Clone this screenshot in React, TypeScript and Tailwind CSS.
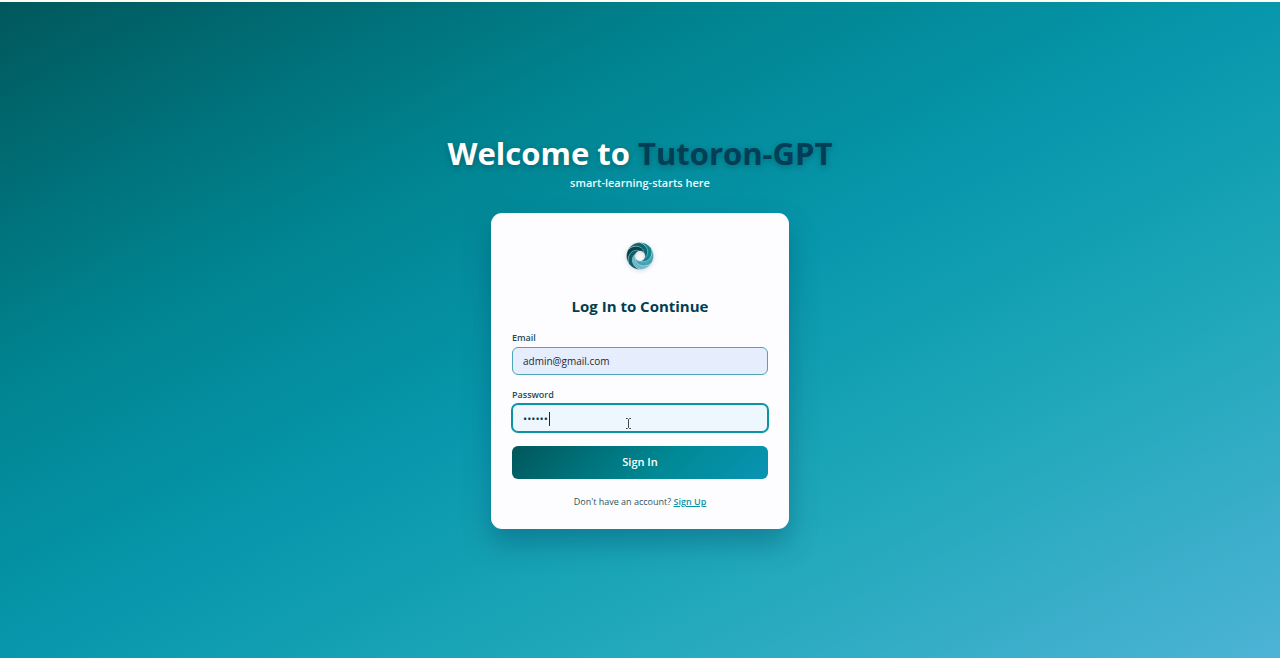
import { useId } from "react";

const blades = [
  { angle: 30, fill: "#6db6cc" },
  { angle: 90, fill: "#0b5f69" },
  { angle: 150, fill: "#04454d" },
  { angle: 210, fill: "#0c6670" },
  { angle: 270, fill: "#15858f" },
  { angle: 330, fill: "#45a3b5" },
];

function polar(radius: number, degrees: number) {
  const t = (degrees * Math.PI) / 180;
  return `${(radius * Math.cos(t)).toFixed(2)} ${(radius * Math.sin(t)).toFixed(2)}`;
}

// Each blade runs along the rim, then spirals in under the next one.
function bladePath() {
  const outer: string[] = [];
  const inner: string[] = [];
  for (let a = 0; a <= 180; a += 10) {
    const rim = a <= 60 ? 13.5 : 13.5 - ((a - 60) / 120) * 8.5;
    outer.push(polar(rim, a));
    const depth = 13.5 - 8.5 * Math.min(1, a / 110);
    inner.push(polar(Math.min(rim, depth), a));
  }
  return `M${outer.join("L")}L${inner.reverse().join("L")}Z`;
}

function Logo() {
  const d = bladePath();
  return (
    <svg viewBox="-16 -16 32 32" className="size-8 drop-shadow-sm" role="img" aria-label="Tutoron-GPT">
      {blades.map((blade) => (
        <path
          key={blade.angle}
          transform={`rotate(${blade.angle})`}
          fill={blade.fill}
          stroke="#e8f6f8"
          strokeWidth={0.3}
          d={d}
        />
      ))}
    </svg>
  );
}

export default function App() {
  const emailId = useId();
  const passwordId = useId();

  return (
    <main className="flex min-h-screen flex-col items-center justify-center border-t-2 border-[#fdfdf0] bg-[linear-gradient(to_bottom_right,#00585c_0%,#00838f_28%,#0797ac_50%,#20a8ba_72%,#4db3d6_100%)] font-['Open_Sans','Noto_Sans',sans-serif]">
      <header className="mb-[22px] flex flex-col items-center">
        <h1 className="text-[31px] leading-[44px] font-bold text-white text-shadow-[0_2px_6px_rgb(0_0_0/0.25)]">
          Welcome to <span className="text-[#023e56]">Tutoron-GPT</span>
        </h1>
        <p className="text-[11px] leading-4 font-semibold text-[#e8fbfc]">smart-learning-starts here</p>
      </header>

      <section className="flex w-full max-w-[298px] flex-col items-center rounded-[11px] bg-[#fdfdff] px-[21px] pt-[27px] pb-5 shadow-[0_14px_28px_rgb(0_60_90/0.35)]">
        <Logo />
        <h2 className="mt-5 text-[15px] leading-7 font-bold text-[#023e4f]">Log In to Continue</h2>
        <form className="mt-3 flex w-full flex-col" onSubmit={(event) => event.preventDefault()}>
          <label htmlFor={emailId} className="text-[9px] leading-3 font-semibold text-[#1d4a56]">
            Email
          </label>
          <input
            id={emailId}
            type="email"
            defaultValue="admin@gmail.com"
            className="mt-[3px] h-7 w-full rounded-[6px] border border-[#4fa5b8] bg-[#e6edfc] px-2.5 text-[10px] text-[#1f2933] outline-none"
          />
          <label htmlFor={passwordId} className="mt-3.5 text-[9px] leading-3 font-semibold text-[#1d4a56]">
            Password
          </label>
          <div className="relative mt-[3px]">
            <input
              id={passwordId}
              type="password"
              defaultValue="123456"
              className="block h-7 w-full rounded-[6px] border border-[#0a93a3] bg-[#eef7fd] px-2.5 text-[11px] text-[#023e4f] caret-transparent ring-1 ring-[#0a93a3] outline-none"
            />
            <span className="absolute top-2 left-[37px] h-3.5 w-px bg-[#1f2933]" />
            <svg viewBox="0 0 7 11" className="absolute top-3.5 left-[113px] h-[11px] w-[7px]" fill="none" stroke="#3a4650" aria-hidden="true">
              <path d="M1 .5h1.5l1 1 1-1H6M3.5 1.5v8M1 10.5h1.5l1-1 1 1H6" />
            </svg>
          </div>
          <button
            type="submit"
            className="mt-3.5 h-[33px] w-full rounded-[6px] bg-linear-[135deg,#00575b_0%,#008a96_60%,#0a94b4_100%] text-[11px] font-semibold text-white"
          >
            Sign In
          </button>
        </form>
        <p className="mt-4 text-[9px] leading-[14px] text-[#2b5560]">
          Don't have an account?{" "}
          <a href="#signup" className="font-semibold text-[#0a93a3] underline">
            Sign Up
          </a>
        </p>
      </section>
    </main>
  );
}
